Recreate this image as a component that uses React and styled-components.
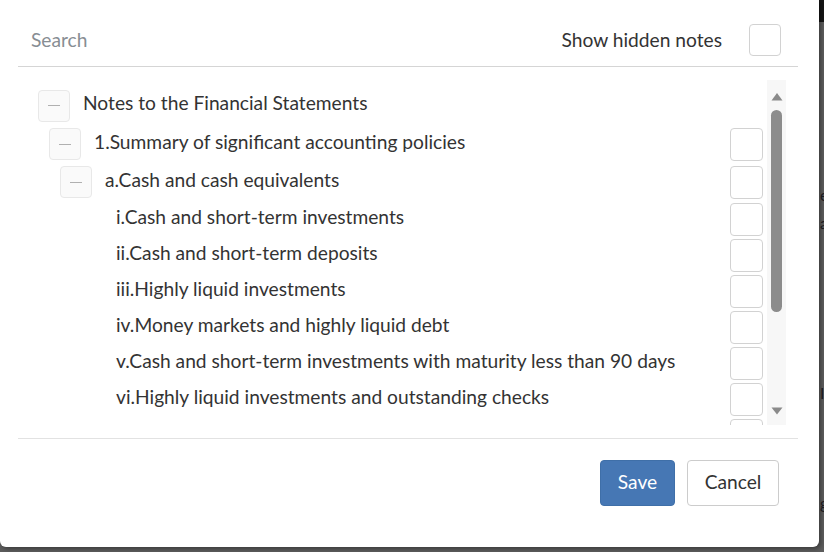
import React from "react";
import styled, { createGlobalStyle } from "styled-components";

const GlobalStyle = createGlobalStyle`
  html, body { margin: 0; padding: 0; background: #5a5a5a; }
  body { font-family: Lato, "Noto Sans", sans-serif; }
  * { box-sizing: border-box; }
`;

const Page = styled.div`
  position: relative;
  width: 824px;
  height: 552px;
  overflow: hidden;
  background: #5c5c5c;
`;

const Backdrop = styled.div`
  position: absolute;
  inset: 0;
  z-index: 0;
  display: flex;
  flex-direction: column;
`;

const BackTopBar = styled.div`
  height: 22px;
  background: #151515;
`;

const BackText = styled.div`
  padding-left: 820px;
  margin-top: ${(p) => p.$top}px;
  font-size: 16px;
  line-height: 14px;
  height: 14px;
  color: #1e1e24;
  white-space: nowrap;
`;

const Modal = styled.div`
  position: relative;
  z-index: 1;
  width: 819px;
  height: 547px;
  background: #ffffff;
  border-radius: 0 0 6px 6px;
  box-shadow: 2px 2px 4px rgba(0, 0, 0, 0.35);
  padding: 0 21px 0 18px;
  display: flex;
  flex-direction: column;
`;

const Header = styled.div`
  height: 67px;
  display: flex;
  align-items: center;
  border-bottom: 1px solid #d5d5d5;
  padding: 14px 17px 0 13px;
`;

const SearchInput = styled.input`
  flex: 1;
  border: none;
  outline: none;
  padding: 0 0 2px 0;
  font-family: Lato, sans-serif;
  font-size: 19.2px;
  color: #333;
  background: transparent;
  &::placeholder { color: #878d93; }
`;

const HiddenLabel = styled.span`
  font-size: 19.2px;
  color: #333;
  margin-right: 27px;
  margin-bottom: 2px;
`;

const CheckBox = styled.span`
  display: block;
  flex: none;
  width: ${(p) => p.$size || 32}px;
  height: ${(p) => p.$size || 32}px;
  border: 1px solid #d2d2d2;
  border-radius: 4px;
  background: #fff;
  margin-left: ${(p) => (p.$auto ? "auto" : "0")};
  margin-right: ${(p) => p.$mr || 0}px;
`;

const ListArea = styled.div`
  margin-top: 13px;
  height: 345px;
  display: flex;
  margin-right: 12px;
`;

const Tree = styled.div`
  flex: 1;
  overflow: hidden;
  padding-top: 6px;
  display: flex;
  flex-direction: column;
`;

const Row = styled.div`
  flex: none;
  height: ${(p) => p.$h}px;
  display: flex;
  align-items: center;
  padding-left: ${(p) => 20 + p.$level * 11}px;
`;

const Toggle = styled.span`
  flex: none;
  width: 32px;
  height: 32px;
  margin-right: 13px;
  border: 1px solid #e8e8e8;
  border-radius: 4px;
  background: #fafafa;
  display: flex;
  align-items: center;
  justify-content: center;
  visibility: ${(p) => (p.$hidden ? "hidden" : "visible")};
  &::before {
    content: "";
    width: 12px;
    height: 1px;
    background: #b0b0b0;
  }
`;

const Label = styled.span`
  font-size: 19.2px;
  color: #333;
  white-space: nowrap;
  margin-bottom: 6px;
`;

const ScrollBar = styled.div`
  flex: none;
  width: 19px;
  background: #f7f7f7;
  display: flex;
  flex-direction: column;
  align-items: center;
`;

const Arrow = styled.svg`
  display: block;
  margin-top: ${(p) => p.$mt}px;
`;

const Thumb = styled.div`
  width: 11px;
  height: 202px;
  margin-top: 9px;
  border-radius: 6px;
  background: #8c8c8c;
`;

const Divider = styled.div`
  margin-top: 13px;
  border-top: 1px solid #e2e2e2;
`;

const Footer = styled.div`
  display: flex;
  justify-content: flex-end;
  gap: 12px;
  padding: 21px 19px 0 0;
`;

const Button = styled.button`
  height: 46px;
  padding: 0 16px 3px;
  min-width: ${(p) => (p.$primary ? 75 : 92)}px;
  font-family: Lato, sans-serif;
  font-size: 19.2px;
  border-radius: 4px;
  cursor: pointer;
  border: 1px solid ${(p) => (p.$primary ? "#3f6fa8" : "#cccccc")};
  background: ${(p) => (p.$primary ? "#4677b4" : "#ffffff")};
  color: ${(p) => (p.$primary ? "#ffffff" : "#333333")};
`;

const rows = [
  { level: 0, text: "Notes to the Financial Statements", h: 39, toggle: true, check: false },
  { level: 1, text: "1.Summary of significant accounting policies", h: 38, toggle: true, check: true },
  { level: 2, text: "a.Cash and cash equivalents", h: 38, toggle: true, check: true },
  { level: 3, text: "i.Cash and short-term investments", h: 36, check: true },
  { level: 3, text: "ii.Cash and short-term deposits", h: 36, check: true },
  { level: 3, text: "iii.Highly liquid investments", h: 36, check: true },
  { level: 3, text: "iv.Money markets and highly liquid debt", h: 36, check: true },
  { level: 3, text: "v.Cash and short-term investments with maturity less than 90 days", h: 36, check: true },
  { level: 3, text: "vi.Highly liquid investments and outstanding checks", h: 36, check: true },
  { level: 3, text: "vii.Cash and cash equivalents", h: 36, check: true },
];

export default function App() {
  return (
    <>
      <GlobalStyle />
      <Page>
        <Backdrop>
          <BackTopBar />
          <BackText $top={166}>e</BackText>
          <BackText $top={14}>a</BackText>
          <BackText $top={156}>I</BackText>
          <BackText $top={96}>g</BackText>
        </Backdrop>
        <Modal>
          <Header>
            <SearchInput placeholder="Search" />
            <HiddenLabel>Show hidden notes</HiddenLabel>
            <CheckBox $size={32} />
          </Header>
          <ListArea>
            <Tree>
              {rows.map((r, i) => (
                <Row key={i} $level={r.level} $h={r.h}>
                  <Toggle $hidden={!r.toggle} />
                  <Label>{r.text}</Label>
                  {r.check && <CheckBox $size={33} $auto $mr={4} />}
                </Row>
              ))}
            </Tree>
            <ScrollBar>
              <Arrow $mt={12} width="12" height="9" viewBox="0 0 12 9">
                <path d="M6 1 L11.5 8.5 L0.5 8.5 Z" fill="#8a8a8a" />
              </Arrow>
              <Thumb />
              <Arrow $mt={95} width="12" height="8" viewBox="0 0 12 8">
                <path d="M0.5 0.5 L11.5 0.5 L6 7.5 Z" fill="#8a8a8a" />
              </Arrow>
            </ScrollBar>
          </ListArea>
          <Divider />
          <Footer>
            <Button $primary>Save</Button>
            <Button>Cancel</Button>
          </Footer>
        </Modal>
      </Page>
    </>
  );
}
